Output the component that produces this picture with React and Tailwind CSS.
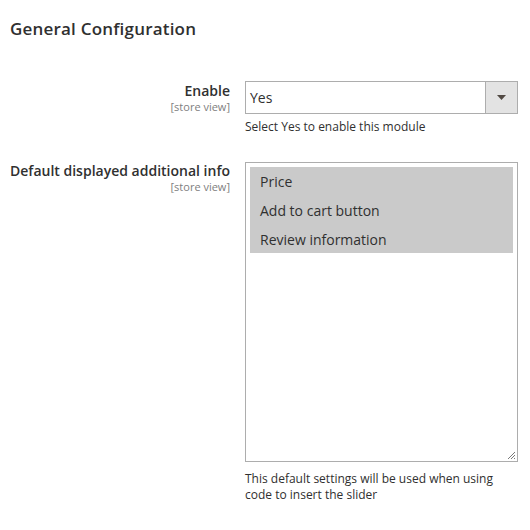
export default function App() {
  const font = { fontFamily: '"Open Sans", "Noto Sans", sans-serif' };
  return (
    <div className="w-[530px] h-[530px] bg-white text-[#303030] px-[10px]" style={font}>
      <h2 className="pt-[17px] text-[17px] leading-[24px] font-semibold text-[#303030] tracking-[0.2px]">
        General Configuration
      </h2>
      <div className="mt-[40px] grid grid-cols-[220px_273px] gap-x-[15px]">
        <div className="text-right pt-[1px]">
          <div className="text-[14px] leading-[18px] font-semibold">Enable</div>
          <div className="text-[11px] leading-[14px] text-[#808080]">[store view]</div>
        </div>
        <div>
          <div className="flex h-[33px] border border-[#adadad] bg-white">
            <div className="flex-1 flex items-center pl-[4px] text-[14px]">Yes</div>
            <div className="w-[33px] -my-px -mr-px border border-[#adadad] bg-[#e3e3e3] flex items-center justify-center">
              <svg width="9" height="5" viewBox="0 0 9 5"><path d="M0 0 H9 L4.5 5 Z" fill="#514943" /></svg>
            </div>
          </div>
          <div className="mt-[5px] text-[12px] leading-[16px]">Select Yes to enable this module</div>
        </div>

        <div className="text-right mt-[27px]">
          <div className="text-[14px] leading-[18px] font-semibold">Default displayed additional info</div>
          <div className="text-[11px] leading-[14px] text-[#808080]">[store view]</div>
        </div>
        <div className="mt-[27px]">
          <div className="relative h-[300px] border border-[#adadad] bg-white p-[4px]">
            <div className="bg-[#cacaca] text-[14px]">
              <div className="h-[29px] flex items-center pl-[10px]">Price</div>
              <div className="h-[29px] flex items-center pl-[10px]">Add to cart button</div>
              <div className="h-[28px] flex items-center pl-[10px]">Review information</div>
            </div>
            <svg className="absolute right-[1px] bottom-[1px]" width="9" height="9" viewBox="0 0 9 9">
              <path d="M8 1 L1 8 M8 4 L4 8 M8 7 L7 8" stroke="#7a7a7a" strokeWidth="1" />
            </svg>
          </div>
          <div className="mt-[9px] text-[12px] leading-[16px]">
            This default settings will be used when using<br />code to insert the slider
          </div>
        </div>
      </div>
    </div>
  );
}
